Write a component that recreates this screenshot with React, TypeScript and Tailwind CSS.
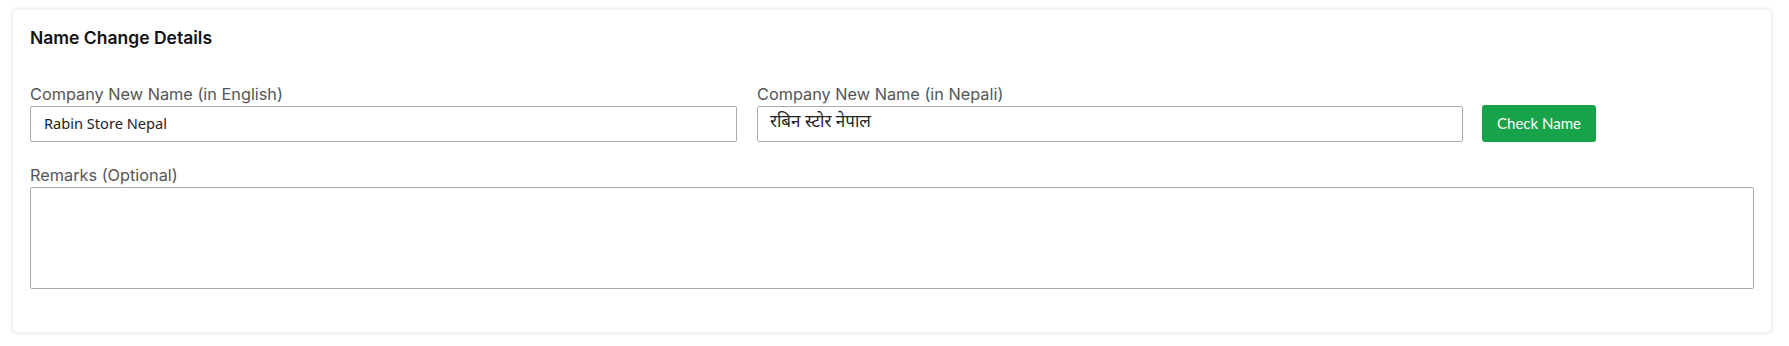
import React from "react";

export default function App() {
  return (
    <div className="min-h-[346px] w-[1789px] bg-white pt-[9px] pl-[12px]" style={{ fontFamily: "Inter, 'Noto Sans', sans-serif" }}>
      <div className="w-[1760px] h-[324px] rounded-[5px] bg-white shadow-[0_0_3px_1px_rgba(0,0,0,0.08)] border border-[#eef0f4] px-[17px] pt-[16px]">
        <h2 className="text-[17.5px] leading-[24px] font-semibold text-[#111]">Name Change Details</h2>
        <div className="mt-[34px] flex items-end">
          <div className="w-[707px] mr-[20px]">
            <label className="block text-[16.3px] leading-[20px] text-[#555] mb-[2px]">Company New Name (in English)</label>
            <div className="h-[36px] border border-[#aaa] rounded-[2px] flex items-center pl-[13px] text-[14.6px] text-[#222]" style={{ fontFamily: "'Noto Sans', sans-serif" }}>
              Rabin Store Nepal
            </div>
          </div>
          <div className="w-[706px] mr-[19px]">
            <label className="block text-[16.3px] leading-[20px] text-[#555] mb-[2px]">Company New Name (in Nepali)</label>
            <div className="h-[36px] border border-[#aaa] rounded-[2px] flex items-center pl-[12px] text-[17px] text-[#222]" style={{ fontFamily: "'Noto Sans Devanagari', 'Noto Sans', sans-serif" }}>
              रबिन स्टोर नेपाल
            </div>
          </div>
          <button className="w-[114px] h-[37px] rounded-[3px] bg-[#16a34a] text-white text-[15px]" style={{ fontFamily: "Lato, 'Noto Sans', sans-serif" }}>
            Check Name
          </button>
        </div>
        <div className="mt-[23px]">
          <label className="block text-[16.3px] leading-[20px] text-[#555] mb-[2px]">Remarks (Optional)</label>
          <div className="h-[102px] border border-[#aaa] rounded-[2px]" />
        </div>
      </div>
    </div>
  );
}
